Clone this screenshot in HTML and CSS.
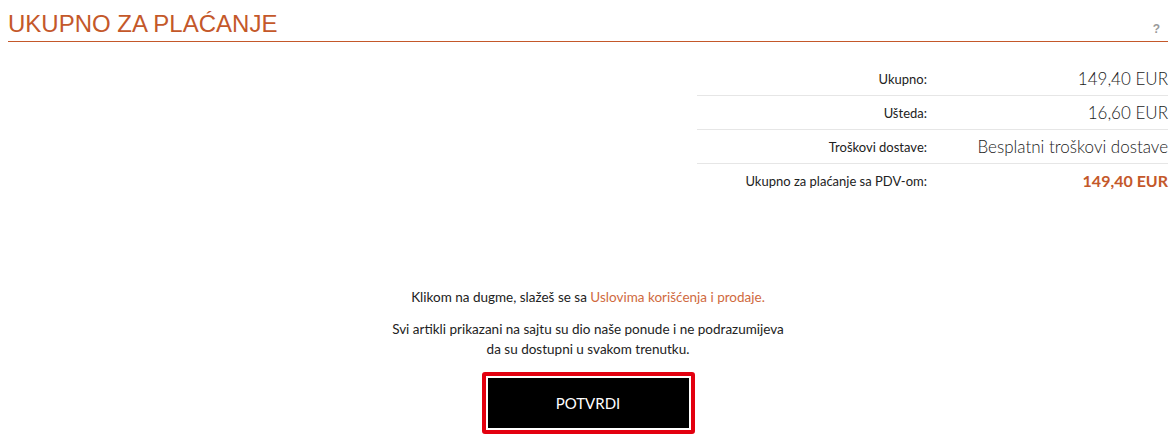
FILE: index.html
```html
<!DOCTYPE html>
<html lang="hr">
<head>
    <meta charset="UTF-8">
    <meta name="viewport" content="width=device-width, initial-scale=1.0">
    <title>Ukupno za plaćanje</title>
    <link rel="stylesheet" href="styles.css">
</head>
<body>
    <div id="checkout-summary">
        <div class="section-header">
            <h2 class="section-title">UKUPNO ZA PLAĆANJE</h2>
            <span class="help-mark">?</span>
        </div>

        <table class="totals-table">
            <tr>
                <td class="totals-label">Ukupno:</td>
                <td class="totals-value">149,40 EUR</td>
            </tr>
            <tr>
                <td class="totals-label">Ušteda:</td>
                <td class="totals-value">16,60 EUR</td>
            </tr>
            <tr>
                <td class="totals-label">Troškovi dostave:</td>
                <td class="totals-value">Besplatni troškovi dostave</td>
            </tr>
            <tr>
                <td class="totals-label">Ukupno za plaćanje sa PDV-om:</td>
                <td class="totals-value grand-total">149,40 EUR</td>
            </tr>
        </table>

        <div id="confirm-area">
            <p class="terms-note">Klikom na dugme, slažeš se sa <a href="#" class="terms-link">Uslovima korišćenja i prodaje.</a></p>
            <p class="availability-note">Svi artikli prikazani na sajtu su dio naše ponude i ne podrazumijeva<br>da su dostupni u svakom trenutku.</p>
            <div class="confirm-frame">
                <button id="confirm-button" type="button">POTVRDI</button>
            </div>
        </div>
    </div>
</body>
</html>
```

FILE: styles.css
```css
:root {
    --accent-color: #c4582a;
    --link-color: #d06a3e;
    --text-color: #222222;
    --muted-color: #9a9a9a;
    --line-color: #e6e6e6;
    --alert-color: #e3000f;
}

body {
    margin: 0;
    padding: 0 7px 0 8px;
    background-color: #ffffff;
    color: var(--text-color);
    font-family: Lato, "Open Sans", sans-serif;
}

.section-header {
    display: flex;
    justify-content: space-between;
    align-items: flex-end;
    border-bottom: 1px solid var(--accent-color);
    height: 41px;
}

.section-title {
    margin: 0 0 2px;
    font-family: "Liberation Sans", Arial, sans-serif;
    font-size: 24px;
    font-weight: normal;
    line-height: 30px;
    color: var(--accent-color);
}

.help-mark {
    font-family: "Liberation Sans", Arial, sans-serif;
    font-size: 12px;
    font-weight: bold;
    color: var(--muted-color);
    margin: 0 8px 5px 0;
}

.totals-table {
    width: 471px;
    margin: 20px 0 0 auto;
    border-collapse: collapse;
}

.totals-table tr + tr td {
    border-top: 1px solid var(--line-color);
}

.totals-table td {
    height: 33px;
    padding: 0;
}

.totals-label {
    width: 230px;
    text-align: right;
    font-size: 13px;
    color: var(--text-color);
}

.totals-value {
    text-align: right;
    font-size: 17px;
    font-weight: 300;
    color: #1a1a1a;
}

.totals-value.grand-total {
    font-size: 16px;
    font-weight: bold;
    color: var(--accent-color);
}

#confirm-area {
    display: flex;
    flex-direction: column;
    align-items: center;
    text-align: center;
    margin-top: 90px;
    font-size: 13.5px;
    line-height: 20px;
}

.terms-note {
    margin: 0 0 12px;
}

.terms-link {
    color: var(--link-color);
    text-decoration: none;
}

.availability-note {
    margin: 0 0 13px;
}

.confirm-frame {
    border: 4px solid var(--alert-color);
    border-radius: 3px;
    padding: 2px;
}

#confirm-button {
    display: block;
    width: 201px;
    height: 50px;
    border: none;
    background-color: #000000;
    color: #ffffff;
    font-family: Lato, "Open Sans", sans-serif;
    font-size: 15px;
    cursor: pointer;
}
```
